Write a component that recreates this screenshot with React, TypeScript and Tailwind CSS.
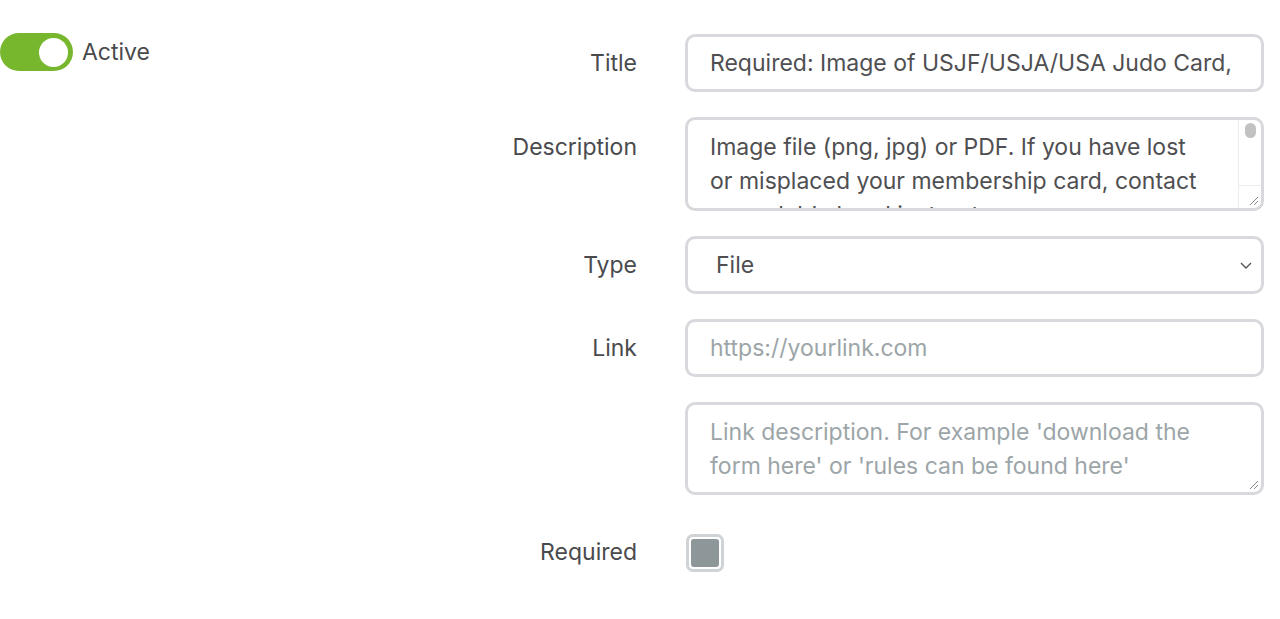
import React from "react";

const font = { fontFamily: "Inter, 'Noto Sans', sans-serif" };

function Label({ children, pt = "pt-[16px]" }: { children: React.ReactNode; pt?: string }) {
  return (
    <div className={`text-right text-[23px] leading-[34px] text-[#4a4a4d] ${pt}`}>{children}</div>
  );
}

export default function App() {
  return (
    <div className="w-[1280px] h-[619px] bg-white overflow-hidden" style={font}>
      <div className="flex pt-[33px]">
        <div className="flex-1">
          <div className="flex items-center gap-[9px]">
            <div className="w-[73px] h-[38px] rounded-full bg-[#77b72d] flex items-center justify-end pr-[5px]">
              <div className="w-[29px] h-[29px] rounded-full bg-white" />
            </div>
            <span className="text-[23px] leading-[34px] text-[#4a4a4d]">Active</span>
          </div>
        </div>
        <div className="grid grid-cols-[160px_579px] gap-x-[48px] gap-y-[25px] pr-[16px] pt-[1px]">
          <Label pt="pt-[12px]">Title</Label>
          <div className="h-[58px] rounded-[10px] border-[3px] border-[#d8d9dc] pl-[22px] flex items-center overflow-hidden whitespace-nowrap text-[23px] text-[#4f4f52]">
            Required: Image of USJF/USJA/USA Judo Card,
          </div>

          <Label pt="pt-[13px]">Description</Label>
          <div className="h-[94px] rounded-[10px] border-[3px] border-[#d8d9dc] flex overflow-hidden">
            <div className="flex-1 overflow-hidden pl-[22px] pr-[34px] pt-[10px] text-[23px] leading-[34px] text-[#4f4f52]">
              Image file (png, jpg) or PDF. If you have lost or misplaced your membership card, contact your club's head instructor or your organization for a copy.
            </div>
            <div className="w-[23px] border-l border-[#ececec] flex flex-col">
              <div className="flex-1 pt-[3px] flex justify-center">
                <div className="w-[11px] h-[15px] rounded-full bg-[#c2c2c2]" />
              </div>
              <div className="h-[23px] border-t border-[#ececec] flex items-end justify-end pr-[2px] pb-[2px]">
                <svg width="12" height="12" viewBox="0 0 12 12">
                  <path d="M11 3 L3 11 M11 7 L7 11" stroke="#8a8a8a" strokeWidth="1" fill="none" />
                </svg>
              </div>
            </div>
          </div>

          <Label pt="pt-[12px]">Type</Label>
          <div className="h-[58px] rounded-[10px] border-[3px] border-[#d8d9dc] pl-[28px] pr-[8px] flex items-center justify-between text-[23px] text-[#4f4f52]">
            <span>File</span>
            <svg width="14" height="10" viewBox="0 0 14 10">
              <path d="M2 3 L7 8 L12 3" stroke="#555" strokeWidth="1.4" fill="none" />
            </svg>
          </div>

          <Label pt="pt-[12px]">Link</Label>
          <div className="h-[58px] rounded-[10px] border-[3px] border-[#d8d9dc] pl-[22px] flex items-center text-[23px] text-[#9ca5a8]">
            https://yourlink.com
          </div>

          <div />
          <div className="h-[93px] rounded-[10px] border-[3px] border-[#d8d9dc] relative pl-[22px] pr-[20px] pt-[10px] text-[23px] leading-[34px] text-[#9ca5a8]">
            Link description. For example 'download the form here' or 'rules can be found here'
            <svg className="absolute right-[2px] bottom-[2px]" width="12" height="12" viewBox="0 0 12 12">
              <path d="M11 3 L3 11 M11 7 L7 11" stroke="#8a8a8a" strokeWidth="1" fill="none" />
            </svg>
          </div>

          <Label pt="pt-[15px]">Required</Label>
          <div className="pt-[14px] pl-[1px]">
            <div className="w-[38px] h-[38px] rounded-[7px] border-[3px] border-[#cfd3d6] p-[2px]">
              <div className="w-full h-full rounded-[3px] bg-[#8d9699]" />
            </div>
          </div>
        </div>
      </div>
    </div>
  );
}
